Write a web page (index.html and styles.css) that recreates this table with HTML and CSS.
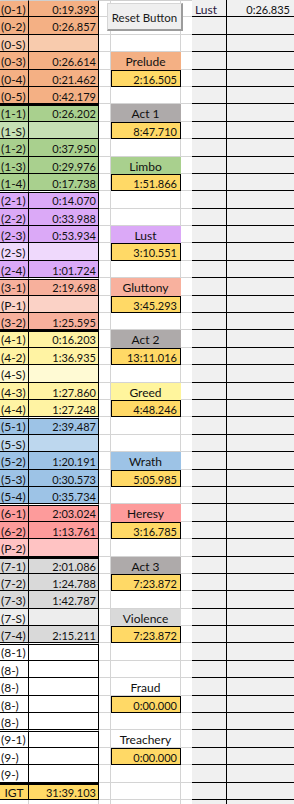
FILE: index.html
```html
<!DOCTYPE html>
<html>
<head>
<meta charset="utf-8">
<link rel="stylesheet" href="styles.css">
</head>
<body>
<div class="sheet">
  <div class="r s0 first"><div class="a">(0-1)</div><div class="b">0:19.393</div><div class="c"></div><div class="d"></div><div class="e"></div><div class="f">Lust</div><div class="g">0:26.835</div></div>
  <div class="r s0"><div class="a">(0-2)</div><div class="b">0:26.857</div><div class="c"></div><div class="d"></div><div class="e"></div><div class="f"></div><div class="g"></div></div>
  <div class="r s0l"><div class="a">(0-S)</div><div class="b"></div><div class="c"></div><div class="d"></div><div class="e"></div><div class="f"></div><div class="g"></div></div>
  <div class="r s0"><div class="a">(0-3)</div><div class="b">0:26.614</div><div class="c"></div><div class="d h hp">Prelude</div><div class="e"></div><div class="f"></div><div class="g"></div></div>
  <div class="r s0"><div class="a">(0-4)</div><div class="b">0:21.462</div><div class="c"></div><div class="d tm">2:16.505</div><div class="e"></div><div class="f"></div><div class="g"></div></div>
  <div class="r s0"><div class="a">(0-5)</div><div class="b">0:42.179</div><div class="c"></div><div class="d"></div><div class="e"></div><div class="f"></div><div class="g"></div></div>
  <div class="r s1 t"><div class="a">(1-1)</div><div class="b">0:26.202</div><div class="c"></div><div class="d h ha">Act 1</div><div class="e"></div><div class="f"></div><div class="g"></div></div>
  <div class="r s1l"><div class="a">(1-S)</div><div class="b"></div><div class="c"></div><div class="d tm">8:47.710</div><div class="e"></div><div class="f"></div><div class="g"></div></div>
  <div class="r s1"><div class="a">(1-2)</div><div class="b">0:37.950</div><div class="c"></div><div class="d"></div><div class="e"></div><div class="f"></div><div class="g"></div></div>
  <div class="r s1"><div class="a">(1-3)</div><div class="b">0:29.976</div><div class="c"></div><div class="d h hl">Limbo</div><div class="e"></div><div class="f"></div><div class="g"></div></div>
  <div class="r s1"><div class="a">(1-4)</div><div class="b">0:17.738</div><div class="c"></div><div class="d tm">1:51.866</div><div class="e"></div><div class="f"></div><div class="g"></div></div>
  <div class="r s2 w"><div class="a">(2-1)</div><div class="b">0:14.070</div><div class="c"></div><div class="d"></div><div class="e"></div><div class="f"></div><div class="g"></div></div>
  <div class="r s2"><div class="a">(2-2)</div><div class="b">0:33.988</div><div class="c"></div><div class="d"></div><div class="e"></div><div class="f"></div><div class="g"></div></div>
  <div class="r s2"><div class="a">(2-3)</div><div class="b">0:53.934</div><div class="c"></div><div class="d h hu">Lust</div><div class="e"></div><div class="f"></div><div class="g"></div></div>
  <div class="r s2l"><div class="a">(2-S)</div><div class="b"></div><div class="c"></div><div class="d tm">3:10.551</div><div class="e"></div><div class="f"></div><div class="g"></div></div>
  <div class="r s2"><div class="a">(2-4)</div><div class="b">1:01.724</div><div class="c"></div><div class="d"></div><div class="e"></div><div class="f"></div><div class="g"></div></div>
  <div class="r s3 w"><div class="a">(3-1)</div><div class="b">2:19.698</div><div class="c"></div><div class="d h hg">Gluttony</div><div class="e"></div><div class="f"></div><div class="g"></div></div>
  <div class="r s3l"><div class="a">(P-1)</div><div class="b"></div><div class="c"></div><div class="d tm">3:45.293</div><div class="e"></div><div class="f"></div><div class="g"></div></div>
  <div class="r s3"><div class="a">(3-2)</div><div class="b">1:25.595</div><div class="c"></div><div class="d"></div><div class="e"></div><div class="f"></div><div class="g"></div></div>
  <div class="r s4 t"><div class="a">(4-1)</div><div class="b">0:16.203</div><div class="c"></div><div class="d h ha">Act 2</div><div class="e"></div><div class="f"></div><div class="g"></div></div>
  <div class="r s4"><div class="a">(4-2)</div><div class="b">1:36.935</div><div class="c"></div><div class="d tm">13:11.016</div><div class="e"></div><div class="f"></div><div class="g"></div></div>
  <div class="r s4l"><div class="a">(4-S)</div><div class="b"></div><div class="c"></div><div class="d"></div><div class="e"></div><div class="f"></div><div class="g"></div></div>
  <div class="r s4"><div class="a">(4-3)</div><div class="b">1:27.860</div><div class="c"></div><div class="d h hr">Greed</div><div class="e"></div><div class="f"></div><div class="g"></div></div>
  <div class="r s4"><div class="a">(4-4)</div><div class="b">1:27.248</div><div class="c"></div><div class="d tm">4:48.246</div><div class="e"></div><div class="f"></div><div class="g"></div></div>
  <div class="r s5 w"><div class="a">(5-1)</div><div class="b">2:39.487</div><div class="c"></div><div class="d"></div><div class="e"></div><div class="f"></div><div class="g"></div></div>
  <div class="r s5l"><div class="a">(5-S)</div><div class="b"></div><div class="c"></div><div class="d"></div><div class="e"></div><div class="f"></div><div class="g"></div></div>
  <div class="r s5"><div class="a">(5-2)</div><div class="b">1:20.191</div><div class="c"></div><div class="d h hw">Wrath</div><div class="e"></div><div class="f"></div><div class="g"></div></div>
  <div class="r s5"><div class="a">(5-3)</div><div class="b">0:30.573</div><div class="c"></div><div class="d tm">5:05.985</div><div class="e"></div><div class="f"></div><div class="g"></div></div>
  <div class="r s5"><div class="a">(5-4)</div><div class="b">0:35.734</div><div class="c"></div><div class="d"></div><div class="e"></div><div class="f"></div><div class="g"></div></div>
  <div class="r s6 w"><div class="a">(6-1)</div><div class="b">2:03.024</div><div class="c"></div><div class="d h hh">Heresy</div><div class="e"></div><div class="f"></div><div class="g"></div></div>
  <div class="r s6"><div class="a">(6-2)</div><div class="b">1:13.761</div><div class="c"></div><div class="d tm">3:16.785</div><div class="e"></div><div class="f"></div><div class="g"></div></div>
  <div class="r s6l"><div class="a">(P-2)</div><div class="b"></div><div class="c"></div><div class="d"></div><div class="e"></div><div class="f"></div><div class="g"></div></div>
  <div class="r s7 t"><div class="a">(7-1)</div><div class="b">2:01.086</div><div class="c"></div><div class="d h ha">Act 3</div><div class="e"></div><div class="f"></div><div class="g"></div></div>
  <div class="r s7"><div class="a">(7-2)</div><div class="b">1:24.788</div><div class="c"></div><div class="d tm">7:23.872</div><div class="e"></div><div class="f"></div><div class="g"></div></div>
  <div class="r s7"><div class="a">(7-3)</div><div class="b">1:42.787</div><div class="c"></div><div class="d"></div><div class="e"></div><div class="f"></div><div class="g"></div></div>
  <div class="r s7l"><div class="a">(7-S)</div><div class="b"></div><div class="c"></div><div class="d h hv">Violence</div><div class="e"></div><div class="f"></div><div class="g"></div></div>
  <div class="r s7"><div class="a">(7-4)</div><div class="b">2:15.211</div><div class="c"></div><div class="d tm">7:23.872</div><div class="e"></div><div class="f"></div><div class="g"></div></div>
  <div class="r w"><div class="a">(8-1)</div><div class="b"></div><div class="c"></div><div class="d"></div><div class="e"></div><div class="f"></div><div class="g"></div></div>
  <div class="r"><div class="a">(8-)</div><div class="b"></div><div class="c"></div><div class="d"></div><div class="e"></div><div class="f"></div><div class="g"></div></div>
  <div class="r"><div class="a">(8-)</div><div class="b"></div><div class="c"></div><div class="d h">Fraud</div><div class="e"></div><div class="f"></div><div class="g"></div></div>
  <div class="r"><div class="a">(8-)</div><div class="b"></div><div class="c"></div><div class="d tm">0:00.000</div><div class="e"></div><div class="f"></div><div class="g"></div></div>
  <div class="r"><div class="a">(8-)</div><div class="b"></div><div class="c"></div><div class="d"></div><div class="e"></div><div class="f"></div><div class="g"></div></div>
  <div class="r w"><div class="a">(9-1)</div><div class="b"></div><div class="c"></div><div class="d h">Treachery</div><div class="e"></div><div class="f"></div><div class="g"></div></div>
  <div class="r"><div class="a">(9-)</div><div class="b"></div><div class="c"></div><div class="d tm">0:00.000</div><div class="e"></div><div class="f"></div><div class="g"></div></div>
  <div class="r"><div class="a">(9-)</div><div class="b"></div><div class="c"></div><div class="d"></div><div class="e"></div><div class="f"></div><div class="g"></div></div>
  <div class="r igt t"><div class="a">IGT</div><div class="b">31:39.103</div><div class="c"></div><div class="d"></div><div class="e"></div><div class="f"></div><div class="g"></div></div>
  <div class="r blank"><div class="a"></div><div class="b"></div><div class="c"></div><div class="d"></div><div class="e"></div><div class="f"></div><div class="g"></div></div>
</div>
<button class="reset" type="button">Reset Button</button>
</body>
</html>
```
FILE: styles.css
```css
* { box-sizing: border-box; margin: 0; padding: 0; }
html, body { width: 294px; height: 804px; overflow: hidden; background: #fff; }
body { font-family: Lato, "Open Sans", sans-serif; color: #111; position: relative; }

.sheet { display: flex; flex-direction: column; }
.r {
  display: grid;
  grid-template-columns: 29px 70px 12px 70px 11px 35px 67px;
  grid-template-rows: minmax(0, 1fr);
  height: 17.4px;
  flex: none;
}
.r > div {
  min-height: 0;
  border-bottom: 1px solid #d4d4d4;
  white-space: nowrap;
  font-size: 12px;
  line-height: 15px;
  padding-top: 2px;
}

/* left timing table */
.a, .b { background: var(--bg, #fff); }
.r > .a { border-right: 1px solid #000; border-bottom-color: #000; padding-left: 1px; }
.r > .b { border-right: 1px solid #000; border-bottom-color: #000; text-align: right; padding-right: 2px; font-size: 11px; }

.first > div { border-top: 1px solid #cfcfcf; padding-top: 1px; }
.first > .f, .first > .g { border-top: none; padding-top: 2px; }

.r.t > .a, .r.t > .b { border-top: 2px solid #000; padding-top: 0; }
.r.w > .a, .r.w > .b { border-top: 1px solid #fff; box-shadow: inset 0 1px 0 #000; padding-top: 1px; }

.s0 { --bg: #f4b084; } .s0l { --bg: #f8cbad; }
.s1 { --bg: #a9d08e; } .s1l { --bg: #c6e0b4; }
.s2 { --bg: #dba9f7; } .s2l { --bg: #efd9fc; }
.s3 { --bg: #f7b09c; } .s3l { --bg: #fbd2c6; }
.s4 { --bg: #fff3a3; } .s4l { --bg: #fffad4; }
.s5 { --bg: #9dc3e6; } .s5l { --bg: #bdd7ee; }
.s6 { --bg: #fd9b9b; } .s6l { --bg: #ffc3c3; }
.s7 { --bg: #d9d9d9; } .s7l { --bg: #ededed; }
.igt { --bg: #ffd966; }
.igt > .a { text-align: center; padding-left: 0; }

.r.blank > .a, .r.blank > .b { border-color: #d4d4d4; }

/* gap and summary columns */
.r > .c { border-right: 1px solid #d4d4d4; }
.r > .d { border-right: 1px solid #d4d4d4; }

.r > .h { text-align: center; }
.hp, .ha, .hl, .hu, .hg, .hr, .hw, .hh, .hv { border-right-color: transparent !important; border-bottom-color: transparent !important; }
.hp { background: #f4b084; }
.ha { background: #aeaaaa; }
.hl { background: #a9d08e; }
.hu { background: #dba9f7; }
.hg { background: #f8b19e; }
.hr { background: #fff59d; }
.hw { background: #9dc3e6; }
.hh { background: #fd9b9b; }
.hv { background: #d9d9d9; }

.r > .tm {
  background: #ffd966;
  border: 1px solid #000;
  text-align: right;
  padding: 1px 3px 0 0;
  font-size: 11px;
}

/* right panel */
.r > .f, .r > .g { background: #f0f0f0; border-bottom: 1px solid #000; }
.r > .f { border-right: 1px solid #000; padding-left: 3px; color: #2a1840; }
.r > .g { text-align: right; padding-right: 4px; font-size: 11px; }

/* form button */
.reset {
  position: absolute;
  left: 107px;
  top: 3px;
  width: 76px;
  height: 28px;
  background: #efefef;
  border-style: solid;
  border-width: 1px 2px 2px 1px;
  border-color: #d6d6d6 #9c9c9c #9c9c9c #d6d6d6;
  font-family: Lato, "Open Sans", sans-serif;
  font-size: 11.5px;
  color: #1a1a1a;
  padding-top: 2px;
  text-align: center;
}
```
